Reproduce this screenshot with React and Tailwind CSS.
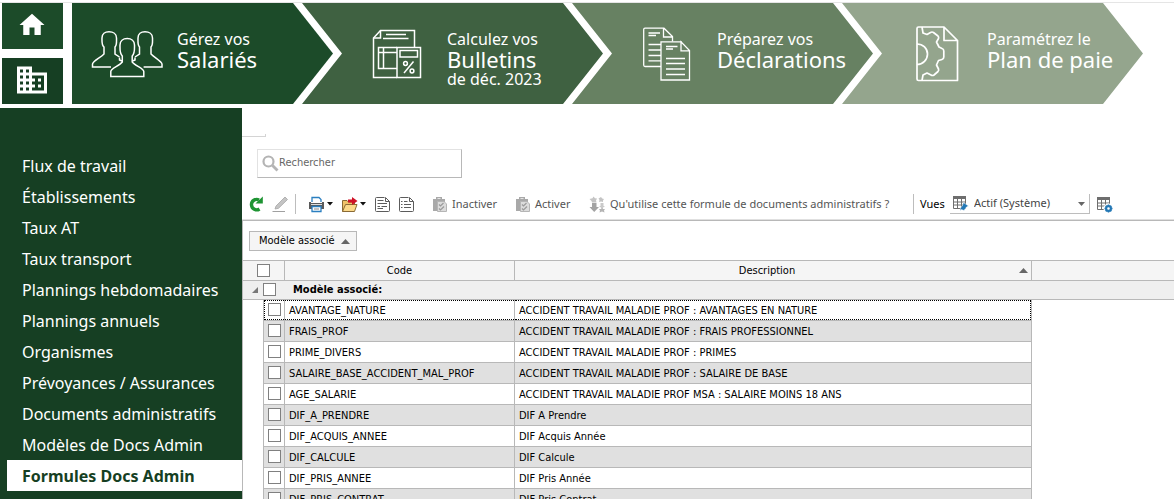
import { useState } from 'react';
import { MdHome, MdBusiness } from 'react-icons/md';

const MENU = [
  'Flux de travail',
  'Établissements',
  'Taux AT',
  'Taux transport',
  'Plannings hebdomadaires',
  'Plannings annuels',
  'Organismes',
  'Prévoyances / Assurances',
  'Documents administratifs',
  'Modèles de Docs Admin',
  'Formules Docs Admin',
];

const ROWS = [
  ['AVANTAGE_NATURE', 'ACCIDENT TRAVAIL MALADIE PROF : AVANTAGES EN NATURE'],
  ['FRAIS_PROF', 'ACCIDENT TRAVAIL MALADIE PROF : FRAIS PROFESSIONNEL'],
  ['PRIME_DIVERS', 'ACCIDENT TRAVAIL MALADIE PROF : PRIMES'],
  ['SALAIRE_BASE_ACCIDENT_MAL_PROF', 'ACCIDENT TRAVAIL MALADIE PROF : SALAIRE DE BASE'],
  ['AGE_SALARIE', 'ACCIDENT TRAVAIL MALADIE PROF MSA : SALAIRE MOINS 18 ANS'],
  ['DIF_A_PRENDRE', 'DIF A Prendre'],
  ['DIF_ACQUIS_ANNEE', 'DIF Acquis Année'],
  ['DIF_CALCULE', 'DIF Calcule'],
  ['DIF_PRIS_ANNEE', 'DIF Pris Année'],
  ['DIF_PRIS_CONTRAT', 'DIF Pris Contrat'],
];

/* ---------- icônes du bandeau ---------- */

function PeopleIcon() {
  return (
    <svg width="73" height="48" viewBox="91 30 73 48" fill="none" stroke="#fff" strokeWidth="1.5" aria-hidden="true">
      <path d="M111 67H92.500V64C93 61 100 58 104 54V47C101.500 45 102 42 102 38C102 34 105 31.800 109 31.800C113 31.800 116.500 34 116.500 38C116.500 42 117 45 115 47V54L119.500 57"/>
      <path d="M143.600 67H162V64C161.500 61 155 58 151 54V47C153 45 152.500 42 152.500 38C152.500 34 149 31.800 145 31.800C141 31.800 138 34 138 38C138 42 137.500 45 139.500 47V54L135 57"/>
      <path d="M110.800 76.500V71.500C111 68.500 119 66 122.300 62V56C119.500 53.500 120 49 120 45C120 41 123 38.600 127.200 38.600C131.500 38.600 134.500 41 134.500 45C134.500 49 135 53.500 132.200 56V62C135.500 66 143.500 68.500 143.800 71.500V76.500Z"/>
      <path d="M119.500 57.500V60L122 61M135 57.500V60L132.500 61"/>
    </svg>
  );
}

function PayslipIcon() {
  return (
    <svg width="50" height="50" viewBox="372 29 50 50" fill="none" stroke="#fff" strokeWidth="1.500" aria-hidden="true">
      <path d="M414.500 47V30.500H380.500L373.500 38V77.500H397"/>
      <path d="M373.500 38H380.500V30.500M386 34.500H406M383 38.500H408.500"/>
      <path d="M397 47.500H378.500V68.500H397M378.500 52.500H397M383.500 47.500V68.500"/>
      <path d="M397 47.500H420.500V77.500H397Z"/>
      <path d="M400 50.500H417.500V57H400Z"/>
      <path d="M413.500 61.500L404 73"/>
      <circle cx="405.500" cy="63.500" r="1.900"/>
      <circle cx="412" cy="71" r="1.900"/>
    </svg>
  );
}

function DeclarationIcon() {
  return (
    <svg width="48" height="54" viewBox="643 27 48 54" fill="none" stroke="#fff" strokeWidth="1.300" aria-hidden="true">
      <path d="M661 66.500H645Q643.700 66.500 643.700 65V29.500Q643.700 28.200 645 28.200H664L672.500 36.500V41.500M663.500 28.200V37H672.500"/>
      <path d="M648.500 33H660M648.500 35.500H656M648.500 44.500H661M648.500 50H661M648.500 55.500H661M648.500 60.800H661"/>
      <path d="M682 41.800H661V80H689.500V50.500L681 41.800V50.800H689.500"/>
      <path d="M666 46.500H677.500M666 49H673M666 58.500H685M666 63.500H685M666 69H685M666 74.500H685"/>
    </svg>
  );
}

function PlanIcon() {
  return (
    <svg width="43" height="57" viewBox="916 25 43 57" fill="none" stroke="#fff" strokeWidth="1.700" strokeLinejoin="round" aria-hidden="true">
      <path d="M918.500 27H944L957.500 40.500V80.500H918.500Q917 80.500 917 79V28.500Q917 27 918.500 27ZM944 27V40.500H957.500"/>
      <path d="M917 44C923 44 927.500 48.500 927.500 54C927.500 59.500 923 64.500 917 64.500"/>
      <path d="M922 27L923 33L927 34.500L930.500 32.500Q932 31.500 933.500 32.500L938 36Q939 37 938.500 38.500L936.500 42L939 47L942 48.500Q943.800 49 943.800 51V57Q943.800 59 942 59.500L938.500 60.500L936.500 65L938.500 69Q939 70.500 938 71.500L934 75Q932.500 76 931 75L927 73L923 75L922 80.500"/>
    </svg>
  );
}

/* ---------- icônes de la barre d'outils ---------- */

function SearchIcon() {
  return (
    <svg width="17" height="17" viewBox="0 0 17 17" fill="none" stroke="#b4b4b4" className="shrink-0" aria-hidden="true">
      <circle cx="6.500" cy="6.500" r="5" strokeWidth="2.200"/>
      <path d="M10.500 10.500L15.500 15.500" strokeWidth="2.800"/>
    </svg>
  );
}

function RefreshIcon() {
  return (
    <svg width="16" height="16" viewBox="0 0 16 16" aria-hidden="true">
      <path d="M11.500 13A5.200 5.200 0 1 1 11 4" fill="none" stroke="#1e9433" strokeWidth="3.400"/>
      <path d="M14.800 0.500V7.500H7.500Z" fill="#1e9433"/>
    </svg>
  );
}

function PencilIcon() {
  return (
    <svg width="17" height="17" viewBox="0 0 17 17" aria-hidden="true">
      <path d="M3 13L4 10L13 1L15.500 3.500L6.500 12.300Z" fill="#c4c4c4" stroke="#a6a6a6" strokeWidth=".8"/>
      <path d="M0.500 15.500H13" stroke="#a0a0a0"/>
    </svg>
  );
}

function PrinterIcon() {
  return (
    <svg width="17" height="17" viewBox="0 0 17 17" aria-hidden="true">
      <path d="M4 6V1.500H11L13 3.500V6" fill="#fff" stroke="#2b7fc0" strokeWidth="1.300"/>
      <path d="M1 6H3V7H14V6H16V13H1Z" fill="#5a5a5a"/>
      <path d="M3 8.500H14" stroke="#ddd"/>
      <path d="M4 10.500H13V15.500H4Z" fill="#fff" stroke="#2b7fc0" strokeWidth="1.300"/>
      <path d="M6 13H11" stroke="#888"/>
    </svg>
  );
}

function FolderIcon() {
  return (
    <svg width="18" height="17" viewBox="0 0 18 17" aria-hidden="true">
      <path d="M1.500 15.500V4.500H6L7.500 6H13.500V9" fill="#f0c36a" stroke="#8a6a35"/>
      <path d="M1.500 15.500L4.500 8.500H16L13.500 15.500Z" fill="#fbd98a" stroke="#8a6a35"/>
      <path d="M7 3.500H11V1L16.500 5L11 9V6.500H7Z" fill="#cf1126"/>
    </svg>
  );
}

function NoteIcon({ numbered }) {
  return (
    <svg width="17" height="17" viewBox="0 0 17 17" fill="none" stroke="#5c5c5c" aria-hidden="true">
      <path d="M10.500 1.500H2.500Q1.500 1.500 1.500 2.500V14.500Q1.500 15.500 2.500 15.500H14.500Q15.500 15.500 15.500 14.500V5.500L11.500 1.500V5.500H15.500"/>
      {numbered
        ? <path d="M3 5.500H4.500M6 5.500H9.500M3 8.500H4.500M6 8.500H13M3 11.500H4.500M6 11.500H13"/>
        : <path d="M3.500 4.500H9.500M3.500 7.500H13M3.500 10.500H6M7.500 10.500H13M3.500 12.500H9"/>}
    </svg>
  );
}

function ClipboardIcon() {
  return (
    <svg width="16" height="17" viewBox="0 0 16 17" aria-hidden="true">
      <path d="M1 3H4V1H10V3H13V6H6V15H1Z" fill="#a9a9a9"/>
      <path d="M5.500 2.500H8.500" stroke="#e4e4e4"/>
      <path d="M5.500 5.500H12L14.500 8V15.500H5.500Z" fill="#dcdcdc" stroke="#b5b5b5"/>
      <path d="M7 8.500L8.500 10L11.500 7M7 12.500L8.500 14L12 10.500" fill="none" stroke="#9a9a9a" strokeWidth="1.200"/>
    </svg>
  );
}

function UsedByIcon() {
  return (
    <svg width="17" height="17" viewBox="0 0 17 17" aria-hidden="true">
      <path d="M3 7H7.500V11H10L5.200 16L.5 11H3Z" fill="#a3a3a3"/>
      <path d="M4.500 .5L6 2.200L8 2.500L7 4.500L7.500 6.500H3L2.500 5L.5 3L3.500 2.200ZM12 1L13.200 2.500L15 3L14 4.500V6L12 5.500L10 6L10.500 4L9.500 2.500Z" fill="#c4c4c4"/>
      <path d="M11.500 7H14.500V10H16L13 12.500L10 10H11.500Z" fill="#cacaca"/>
      <path d="M13 11.500L14.200 13H16L15 14.500L15.500 16.500L13 15.500L10.500 16.500L11 14.500L10 13H12Z" fill="#b4b4b4"/>
    </svg>
  );
}

function GridViewIcon({ gear }) {
  return (
    <svg width="17" height="17" viewBox="0 0 17 17" fill="none" aria-hidden="true">
      <path d="M1 1H14V4H1Z" fill="#6e6e6e"/>
      <path d="M1.500 1.500H13.500V13.500H1.500ZM1.500 7H13.500M1.500 10H13.500M5.500 3V13.500M9.500 3V13.500" stroke="#6e6e6e"/>
      {gear ? (
        <g>
          <circle cx="12.500" cy="12.500" r="5" fill="#fff"/>
          <circle cx="12.500" cy="12.500" r="2.400" stroke="#2478b5" strokeWidth="2.200"/>
          <path d="M12.500 8.500V10M12.500 15V16.500M8.500 12.500H10M15 12.500H16.500M9.700 9.700L10.700 10.700M14.300 14.300L15.300 15.300M9.700 15.300L10.700 14.300M14.300 10.700L15.300 9.700" stroke="#2478b5" strokeWidth="1.500"/>
        </g>
      ) : (
        <path d="M11.500 7.500L16.500 11L14.500 12L12 15.500L9.500 14.500L8 16L8.500 13L10.500 10.500Z" fill="#2478b5" stroke="#fff" strokeWidth=".5"/>
      )}
    </svg>
  );
}

function Caret() {
  return (
    <svg width="6" height="4" viewBox="0 0 6 4" className="shrink-0" aria-hidden="true">
      <path d="M0 0H6L3 3.500Z" fill="#111"/>
    </svg>
  );
}

function SortArrow() {
  return (
    <svg width="9" height="5" viewBox="0 0 9 5" className="shrink-0" aria-hidden="true">
      <path d="M4.500 0L9 5H0Z" fill="#666"/>
    </svg>
  );
}

/* ---------- blocs ---------- */

const STEPS = [
  { top: 'Calculez vos', title: 'Bulletins', sub: 'de déc. 2023', bg: 'bg-[#3f6141]', pad: 'pl-[70px]', icon: <PayslipIcon/> },
  { top: 'Préparez vos', title: 'Déclarations', bg: 'bg-[#678162]', pad: 'pl-[71px]', icon: <DeclarationIcon/> },
  { top: 'Paramétrez le', title: 'Plan de paie', bg: 'bg-[#94a58d]', pad: 'pl-[74px]', icon: <PlanIcon/> },
];

function StepLabel({ top, title, sub }) {
  return (
    <span className="flex flex-col text-left text-white whitespace-nowrap h-[60px] mt-[10px]">
      <span className="text-[16px] leading-5">{top}</span>
      <span className="text-[22px] leading-5">{title}</span>
      {sub && <span className="text-[16px] leading-5">{sub}</span>}
    </span>
  );
}

function Banner() {
  return (
    <header className="flex shrink-0 mt-[2px] pl-[2px] pr-[31px] border-t border-[#e5e5e5]">
      <div className="flex flex-col gap-[9px] w-[61px] mr-[9px] shrink-0">
        <button aria-label="Accueil" className="h-[46px] pb-[3px] pr-px bg-[#1c4b29] text-white flex items-center justify-center">
          <MdHome size={30}/>
        </button>
        <button aria-label="Société" className="h-[46px] pb-[3px] pr-px bg-[#163f23] text-white flex items-center justify-center">
          <MdBusiness size={36}/>
        </button>
      </div>
      <nav className="flex flex-1 h-[101px]">
        <button className="grow basis-[261px] bg-[#1c4b29] pl-[19px] flex items-center [clip-path:polygon(0_0,calc(100%-40px)_0,100%_50%,calc(100%-40px)_100%,0_100%)]">
          <span className="w-[86px] shrink-0"><PeopleIcon/></span>
          <StepLabel top="Gérez vos" title="Salariés"/>
        </button>
        {STEPS.map(s => (
          <button key={s.title}
            className={`grow basis-[301px] -ml-[31px] flex items-center [clip-path:polygon(0_0,calc(100%-40px)_0,100%_50%,calc(100%-40px)_100%,0_100%,40px_50%)] ${s.bg}`}>
            <span className={`w-[145px] shrink-0 ${s.pad}`}>{s.icon}</span>
            <StepLabel {...s}/>
          </button>
        ))}
      </nav>
    </header>
  );
}

function Sidebar({ active, onSelect }) {
  return (
    <nav className="w-[242px] shrink-0 bg-[#163f23] pt-[42px] pl-[7px]">
      {MENU.map(m => (
        <a key={m} href="#" onClick={e => { e.preventDefault(); onSelect(m); }}
          className={`block h-[31px] leading-[32px] pl-[15px] text-[16px] whitespace-nowrap ${m === active ? 'bg-white text-[#163f23] font-bold' : 'text-white'}`}>
          {m}
        </a>
      ))}
    </nav>
  );
}

function Toolbar() {
  return (
    <div className="flex items-center h-[32px] pt-px pl-[6px] text-[11px] text-[#555] whitespace-nowrap border-b border-[#e0e0e0]">
      <button aria-label="Actualiser" className="mr-2"><RefreshIcon/></button>
      <button aria-label="Modifier"><PencilIcon/></button>
      <span className="w-px h-5 bg-[#bdbdbd] ml-[6px] mr-[12px]"/>
      <button aria-label="Imprimer" className="flex items-center gap-[2px] mr-2"><PrinterIcon/><Caret/></button>
      <button aria-label="Exporter" className="flex items-center gap-[1px] mr-2"><FolderIcon/><Caret/></button>
      <button aria-label="Note" className="mr-[7px]"><NoteIcon/></button>
      <button aria-label="Liste" className="mr-[17px]"><NoteIcon numbered/></button>
      <button className="flex items-center gap-1 w-[83px]"><ClipboardIcon/>Inactiver</button>
      <button className="flex items-center gap-1 w-[74px]"><ClipboardIcon/>Activer</button>
      <button className="flex items-center gap-1 w-[324px]"><UsedByIcon/>Qu'utilise cette formule de documents administratifs ?</button>
      <span className="w-px h-5 bg-[#bdbdbd] mr-[6px]"/>
      <label htmlFor="vue" className="text-black w-[30px]">Vues</label>
      <div className="relative flex items-center w-[140px] h-5 pl-[2px] border-b border-r border-[#bdbdbd]">
        <GridViewIcon/>
        <select id="vue" className="appearance-none flex-1 pl-[5px] text-[#444] bg-transparent">
          <option>Actif (Système)</option>
        </select>
        <svg width="7" height="4" viewBox="0 0 7 4" className="absolute right-1 top-2 pointer-events-none" aria-hidden="true">
          <path d="M0 0H7L3.500 4Z" fill="#666"/>
        </svg>
      </div>
      <button aria-label="Gérer les vues" className="ml-[6px]"><GridViewIcon gear/></button>
    </div>
  );
}

function Check({ label }) {
  return <input type="checkbox" aria-label={label} className="appearance-none block shrink-0 w-[13px] h-[13px] border border-[#808080] bg-white checked:bg-[#1c4b29]"/>;
}

function Grid() {
  return (
    <table className="w-full table-fixed border-separate border-spacing-0 text-[11px] leading-4 text-black whitespace-nowrap">
      <colgroup>
        <col className="w-[21px]"/>
        <col className="w-[21px]"/>
        <col className="w-[230px]"/>
        <col/>
        <col className="w-[142px]"/>
      </colgroup>
      <thead>
        <tr className="h-5 bg-[#f5f5f5]">
          <th colSpan={2} className="p-0 pl-[14px] border-b border-r border-[#b8b8b8]"><Check label="Tout sélectionner"/></th>
          <th className="p-0 font-normal border-b border-r border-[#b8b8b8]">Code</th>
          <th className="p-0 font-normal border-b border-r border-[#b8b8b8]">
            <div className="flex items-center pr-[3px]">
              <span className="flex-1">Description</span><SortArrow/>
            </div>
          </th>
          <td className="p-0 border-b border-[#b8b8b8]"/>
        </tr>
      </thead>
      <tbody>
        <tr className="h-[19px] bg-[#efefef]">
          <td colSpan={5} className="p-0 border-b border-[#b8b8b8]">
            <div className="flex items-center h-[18px] pb-px pl-[9px] gap-[5px]">
              <svg width="6" height="6" viewBox="0 0 6 6" aria-hidden="true"><path d="M6 0V6H0Z" fill="#777"/></svg>
              <Check label="Modèle associé"/>
              <span className="font-bold pl-3 pt-px">Modèle associé:</span>
            </div>
          </td>
        </tr>
        {ROWS.map(([code, desc], i) => {
          const line = i === 0 ? 'border-y border-dotted border-black' : '';
          const cell = `p-0 border-b border-r border-[#b8b8b8] ${i % 2 ? 'bg-[#e0e0e0]' : 'bg-white'}`;
          return (
            <tr key={code} className="h-[21px]">
              <td className="p-0 border-r border-[#b8b8b8]"/>
              <td className={cell}>
                <div className={`flex items-start h-5 ${line} ${i === 0 ? 'border-l pl-[3px] pt-[2px]' : 'pl-1 pt-[3px]'}`}><Check label={code}/></div>
              </td>
              <td className={cell}>
                <div className={`flex items-center h-5 pl-1 pt-px ${line}`}>{code}</div>
              </td>
              <td className={cell}>
                <div className={`flex items-center h-5 pl-1 pt-px ${line} ${i === 0 ? 'border-r' : ''}`}>{desc}</div>
              </td>
              <td className="p-0"/>
            </tr>
          );
        })}
      </tbody>
    </table>
  );
}

export default function App() {
  const [active, setActive] = useState('Formules Docs Admin');
  return (
    <div className="h-screen flex flex-col overflow-hidden bg-white font-['Segoe_UI','Noto_Sans','Open_Sans',sans-serif]">
      <Banner/>
      <div className="flex flex-1 min-h-0 mt-1">
        <Sidebar active={active} onSelect={setActive}/>
        <main className="flex-1 min-w-0 flex flex-col">
          <div className="w-6 h-[3px] mt-[26px] border-b border-r border-[#d4d4d4]"/>
          <label className="flex items-center w-[205px] h-[29px] mt-3 mb-[10px] ml-[15px] pl-[4px] border border-t-[#e2e2e2] border-l-[#e2e2e2] border-r-[#b8b8b8] border-b-[#b8b8b8]">
            <SearchIcon/>
            <input type="text" placeholder="Rechercher" aria-label="Rechercher"
              className="flex-1 min-w-0 text-[11px] font-['Tahoma','DejaVu_Sans_Condensed','Noto_Sans',sans-serif] placeholder:text-[#666] focus:outline-none"/>
          </label>
          <Toolbar/>
          <section className="flex-1 min-h-0 border-t border-l border-[#b8b8b8] font-['Tahoma','DejaVu_Sans_Condensed','Noto_Sans',sans-serif]">
            <div className="h-10 pt-[10px] pl-[6px] border-b border-[#b8b8b8]">
              <button className="flex items-center gap-[6px] h-5 pl-[9px] pr-[6px] border border-[#b8b8b8] bg-[#f5f5f5] text-[11px] text-black">
                Modèle associé<SortArrow/>
              </button>
            </div>
            <Grid/>
          </section>
        </main>
      </div>
    </div>
  );
}
